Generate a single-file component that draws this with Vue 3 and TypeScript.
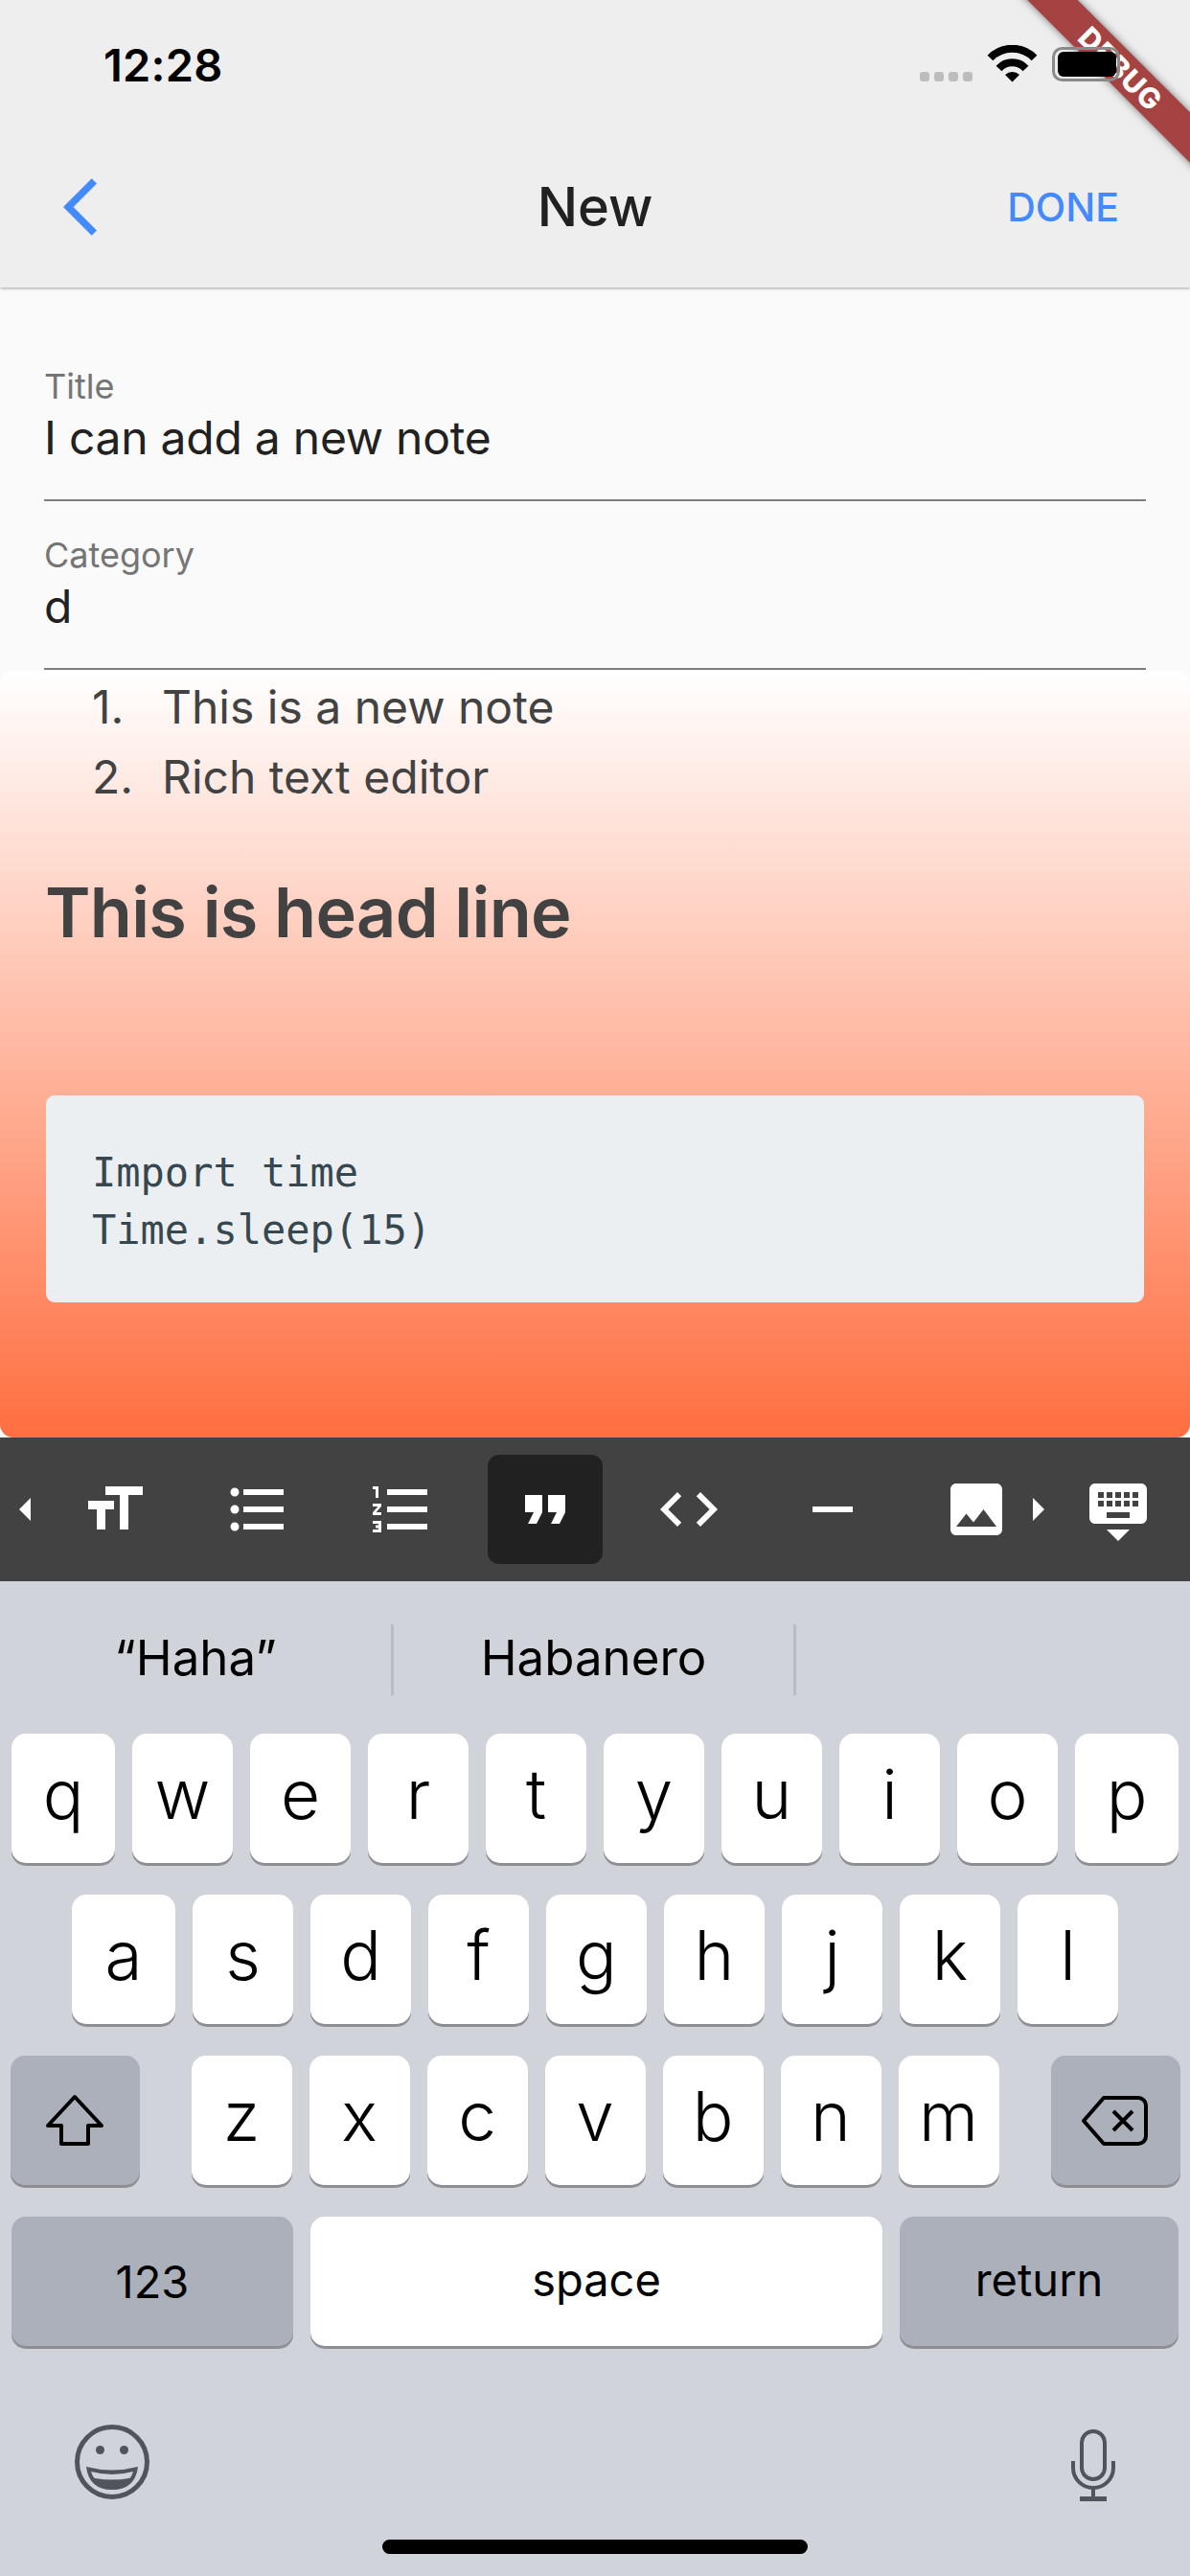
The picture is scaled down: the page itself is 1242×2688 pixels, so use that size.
<script setup lang="ts">
interface Tool {
  name: string
  d: string
  active?: boolean
}

const tools: Tool[] = [
  { name: 'size', d: 'M9 4v3h5v12h3V7h5V4H9zm-6 8h3v7h3v-7h3V9H3v3z' },
  {
    name: 'bullets',
    d: 'M4 10.5c-.83 0-1.5.67-1.5 1.5s.67 1.5 1.5 1.5 1.5-.67 1.5-1.5-.67-1.5-1.5-1.5zm0-6c-.83 0-1.5.67-1.5 1.5S3.17 7.5 4 7.5 5.5 6.83 5.5 6 4.83 4.5 4 4.5zm0 12c-.83 0-1.5.68-1.5 1.5s.68 1.5 1.5 1.5 1.5-.68 1.5-1.5-.67-1.5-1.5-1.5zM7 19h14v-2H7v2zm0-6h14v-2H7v2zm0-8v2h14V5H7z',
  },
  {
    name: 'numbers',
    d: 'M2 17h2v.5H3v1h1v.5H2v1h3v-4H2v1zm1-9h1V4H2v1h1v3zm-1 3h1.8L2 13.1v.9h3v-1H3.2L5 10.9V10H2v1zm5-6v2h14V5H7zm0 14h14v-2H7v2zm0-6h14v-2H7v2z',
  },
  { name: 'quote', d: 'M6 17h3l2-4V7H5v6h3zm8 0h3l2-4V7h-6v6h3z', active: true },
  { name: 'code', d: 'M9.4 16.6L4.8 12l4.6-4.6L8 6l-6 6 6 6 1.4-1.4zm5.2 0l4.6-4.6-4.6-4.6L16 6l6 6-6 6-1.4-1.4z' },
  { name: 'rule', d: 'M5 11h14v2H5z' },
  {
    name: 'image',
    d: 'M21 19V5c0-1.1-.9-2-2-2H5c-1.1 0-2 .9-2 2v14c0 1.1.9 2 2 2h14c1.1 0 2-.9 2-2zM8.5 13.5l2.5 3.01L14.5 12l4.5 6H5l3.5-4.5z',
  },
]

const hideKeyboard =
  'M20 3H4c-1.1 0-1.99.9-1.99 2L2 15c0 1.1.9 2 2 2h16c1.1 0 2-.9 2-2V5c0-1.1-.9-2-2-2zm-9 3h2v2h-2V6zm0 3h2v2h-2V9zM8 6h2v2H8V6zm0 3h2v2H8V9zm-1 2H5V9h2v2zm0-3H5V6h2v2zm9 7H8v-2h8v2zm0-4h-2V9h2v2zm0-3h-2V6h2v2zm3 3h-2V9h2v2zm0-3h-2V6h2v2zm-7 15l4-4H8l4 4z'

const rowOne = 'qwertyuiop'.split('')
const rowTwo = 'asdfghjkl'.split('')
const rowThree = 'zxcvbnm'.split('')
</script>

<template>
  <div class="screen">
    <header class="appbar">
      <div class="status">
        <span class="time">12:28</span>
        <svg class="status_icons" width="212" height="40" viewBox="960 47 212 40">
          <rect x="960" y="75" width="10" height="10" rx="3" fill="#bdbdbd" />
          <rect x="975" y="75" width="10" height="10" rx="3" fill="#bdbdbd" />
          <rect x="990" y="75" width="10" height="10" rx="3" fill="#bdbdbd" />
          <rect x="1005" y="75" width="10" height="10" rx="3" fill="#bdbdbd" />
          <path d="M1033.5 60.5a32 32 0 0 1 46 0" fill="none" stroke="#000" stroke-width="8" />
          <path d="M1042.5 71.5a19 19 0 0 1 28 0" fill="none" stroke="#000" stroke-width="8" />
          <path d="M1049 78a11 11 0 0 1 15 0l-7.500 7.500z" fill="#000" />
          <rect x="1099.500" y="50.500" width="68" height="33" rx="9" fill="none" stroke="#8a8a8a" stroke-width="3" />
          <rect x="1104" y="54" width="61" height="26" rx="6" fill="#000" />
        </svg>
      </div>
      <nav class="nav">
        <svg class="nav_back" width="72" height="72" viewBox="0 0 24 24">
          <path d="M11.67 3.87L9.9 2.1 0 12l9.9 9.9 1.77-1.77L3.54 12z" fill="#448aff" />
        </svg>
        <span class="nav_title">New</span>
        <span class="nav_done">DONE</span>
      </nav>
    </header>

    <div class="banner"><span>DEBUG</span></div>

    <main class="page">
      <section class="form">
        <div class="field">
          <label class="field_label">Title</label>
          <span class="field_value">I can add a new note</span>
        </div>
        <div class="field">
          <label class="field_label">Category</label>
          <span class="field_value">d</span>
        </div>
      </section>

      <section class="editor">
        <ol class="note_list">
          <li><span class="note_num">1.</span>This is a new note</li>
          <li><span class="note_num">2.</span>Rich text editor</li>
        </ol>
        <h1 class="headline">This is head line</h1>
        <pre class="codeblock">Import time
Time.sleep(15)</pre>
      </section>

      <section class="toolbar">
        <div class="toolbar_scroll">
          <svg class="toolbar_arrow left" width="12" height="24" viewBox="0 0 12 24">
            <path d="M12 0v24L0 12z" fill="#fff" />
          </svg>
          <button
            v-for="tool in tools"
            :key="tool.name"
            class="tool"
            :class="{ active: tool.active }"
          >
            <svg width="72" height="72" viewBox="0 0 24 24">
              <path :d="tool.d" fill="#fff" fill-rule="evenodd" />
            </svg>
          </button>
          <svg class="toolbar_arrow right" width="12" height="24" viewBox="0 0 12 24">
            <path d="M0 0v24l12-12z" fill="#fff" />
          </svg>
        </div>
        <svg class="toolbar_hide" width="72" height="72" viewBox="0 0 24 24">
          <path :d="hideKeyboard" fill="#fff" fill-rule="evenodd" />
        </svg>
      </section>

      <section class="keyboard">
        <div class="suggestions">
          <span class="suggestion">“Haha”</span>
          <span class="suggestion">Habanero</span>
          <span class="suggestion"></span>
        </div>

        <div class="keys">
          <div class="key_row">
            <span v-for="k in rowOne" :key="k" class="key letter">{{ k }}</span>
          </div>
          <div class="key_row">
            <span v-for="k in rowTwo" :key="k" class="key letter">{{ k }}</span>
          </div>
          <div class="key_row">
            <span class="key special wide">
              <svg width="64" height="56" viewBox="0 0 64 56">
                <path
                  d="M32 3 L60 33 H46 V52 H18 V33 H4 Z"
                  fill="none"
                  stroke="#000"
                  stroke-width="4"
                  stroke-linejoin="round"
                />
              </svg>
            </span>
            <div class="key_group">
              <span v-for="k in rowThree" :key="k" class="key letter">{{ k }}</span>
            </div>
            <span class="key special wide">
              <svg width="72" height="54" viewBox="0 0 72 54">
                <path
                  d="M24 3H60a8 8 0 0 1 8 8V43a8 8 0 0 1-8 8H24L3 27Z"
                  fill="none"
                  stroke="#000"
                  stroke-width="4"
                  stroke-linejoin="round"
                />
                <path d="M34 17 54 37M54 17 34 37" stroke="#000" stroke-width="4" />
              </svg>
            </span>
          </div>
          <div class="key_row">
            <span class="key special label numbers">123</span>
            <span class="key label space">space</span>
            <span class="key special label return">return</span>
          </div>
        </div>

        <div class="keyboard_bottom">
          <svg width="80" height="80" viewBox="0 0 80 80">
            <circle cx="40" cy="40" r="36.500" fill="none" stroke="#50545c" stroke-width="5" />
            <circle cx="27.500" cy="27.500" r="4.500" fill="#50545c" />
            <circle cx="52.500" cy="27.500" r="4.500" fill="#50545c" />
            <path d="M13 45Q40 52 67 45 64 69 40 69 16 69 13 45Z" fill="#50545c" />
            <path d="M18 50Q40 56 62 50 60 56 58 57 40 60 22 57 20 56 18 50Z" fill="#d0d3d9" />
          </svg>
          <svg class="mic" width="48" height="76" viewBox="0 0 48 76">
            <rect x="12" y="2" width="24" height="50" rx="12" fill="none" stroke="#50545c" stroke-width="4" />
            <path d="M3 33V40a21 21 0 0 0 42 0V33" fill="none" stroke="#50545c" stroke-width="4" />
            <path d="M24 61V72" stroke="#50545c" stroke-width="4" />
            <rect x="10" y="70" width="28" height="5" fill="#50545c" />
          </svg>
        </div>
        <div class="home_bar"></div>
      </section>
    </main>
  </div>
</template>

<style scoped>
.screen {
  position: relative;
  width: 1242px;
  height: 2688px;
  overflow: hidden;
  background: #fafafa;
  font-family: Inter, 'Liberation Sans', sans-serif;
  color: #212121;
}

.appbar {
  height: 300px;
  background: #eeeeee;
  box-shadow: 0 1px 3px rgba(0, 0, 0, 0.35);
  position: relative;
}
.status {
  position: relative;
  z-index: 4;
  height: 132px;
  display: flex;
  justify-content: space-between;
  align-items: flex-start;
  padding: 0 70px 0 108px;
}
.time {
  margin-top: 40px;
  font-size: 47px;
  line-height: 56px;
  font-weight: 600;
  letter-spacing: 0.2px;
  color: #000;
}
.status_icons {
  margin-top: 47px;
}
.nav {
  height: 168px;
  display: grid;
  grid-template-columns: 1fr auto 1fr;
  align-items: center;
  padding: 0 74px 0 66px;
}
.nav_title {
  font-size: 56px;
  font-weight: 500;
  color: #212121;
  margin-left: 8px;
}
.nav_done {
  justify-self: end;
  font-size: 41px;
  font-weight: 500;
  color: #448aff;
}

.banner {
  position: absolute;
  top: 53px;
  right: -128px;
  width: 400px;
  height: 37px;
  z-index: 3;
  transform: rotate(45deg);
  background: rgba(140, 10, 10, 0.75);
  box-shadow: 0 0 8px rgba(0, 0, 0, 0.5);
  display: flex;
  align-items: center;
  justify-content: center;
  color: #fff;
  font-size: 30px;
  font-weight: 800;
  letter-spacing: 1px;
}

.form {
  height: 400px;
  padding: 0 46px;
}
.field {
  box-sizing: border-box;
  height: 176px;
  padding-top: 34px;
  display: flex;
  flex-direction: column;
  border-bottom: 2px solid #7d7d7d;
}
.field:first-child {
  height: 223px;
  padding-top: 81px;
}
.field_label {
  font-size: 36px;
  line-height: 44px;
  color: #757575;
}
.field_value {
  margin-top: 2px;
  font-size: 48px;
  line-height: 60px;
  letter-spacing: -0.25px;
  color: #212121;
}

.editor {
  height: 800px;
  border-radius: 14px;
  background: linear-gradient(180deg, #ffffff 0%, #ff6e40 100%);
  color: #424242;
  overflow: hidden;
}
.note_list {
  list-style: none;
  margin: 0;
  padding: 1px 0 0 96px;
}
.note_list li {
  display: flex;
  font-size: 48px;
  line-height: 73px;
}
.note_num {
  width: 73px;
}
.headline {
  margin: 60px 0 0;
  padding-left: 47px;
  font-size: 72px;
  line-height: 90px;
  font-weight: 600;
  letter-spacing: -0.7px;
  color: #424242;
}
.codeblock {
  margin: 146px 48px 0;
  padding: 51px 48px 45px;
  height: 216px;
  box-sizing: border-box;
  background: #eceff1;
  border-radius: 9px;
  font-family: 'DejaVu Sans Mono', 'Liberation Mono', monospace;
  font-size: 42px;
  line-height: 60px;
  color: #37474f;
}

.toolbar {
  height: 150px;
  background: #424242;
  display: flex;
  align-items: center;
}
.toolbar_scroll {
  position: relative;
  width: 1109px;
  height: 100%;
  padding-left: 44px;
  box-sizing: border-box;
  display: flex;
  align-items: center;
  gap: 30px;
}
.tool {
  flex: none;
  width: 120px;
  height: 114px;
  margin: 0 -15px 0 15px;
  padding: 0;
  border: 0;
  border-radius: 12px;
  background: transparent;
  display: flex;
  align-items: center;
  justify-content: center;
}
.tool.active {
  background: #212121;
}
.toolbar_arrow {
  position: absolute;
  top: 63px;
}
.toolbar_arrow.left {
  left: 20px;
}
.toolbar_arrow.right {
  left: 1078px;
}
.toolbar_hide {
  margin-left: 22px;
}

.keyboard {
  height: 1038px;
  background: #d0d3d9;
  display: flex;
  flex-direction: column;
}
.suggestions {
  height: 159px;
  display: flex;
  align-items: center;
}
.suggestion {
  flex: none;
  height: 74px;
  margin-top: 5px;
  padding-bottom: 6px;
  width: 420px;
  display: flex;
  align-items: center;
  justify-content: center;
  font-size: 51px;
  color: #000;
  border-right: 3px solid #b9bcc2;
  box-sizing: border-box;
}
.suggestion:first-child {
  width: 411px;
}
.suggestion:last-child {
  width: 411px;
  border-right: 0;
}
.keys {
  display: flex;
  flex-direction: column;
  gap: 33px;
  padding: 0 12px;
}
.key_row {
  display: flex;
  justify-content: center;
  gap: 18px;
  height: 135px;
}
.key_group {
  display: flex;
  gap: 18px;
  margin: 0 36px;
}
.key {
  flex: none;
  width: 105px;
  height: 135px;
  border-radius: 15px;
  background: #fff;
  box-shadow: 0 3px 0 #8e8f94;
  display: flex;
  align-items: center;
  justify-content: center;
  color: #000;
}
.letter {
  font-size: 71px;
  font-weight: 350;
  line-height: 1;
  padding-bottom: 8px;
  box-sizing: border-box;
}
.key_row > .letter:first-child,
.key_row:first-child > .letter:last-child {
  width: 108px;
}
.special {
  background: #abb0ba;
}
.wide {
  width: 135px;
}
.label {
  font-size: 47px;
}
.numbers {
  width: 294px;
}
.space {
  width: 597px;
  padding-bottom: 4px;
  box-sizing: border-box;
}
.return {
  width: 291px;
  padding-bottom: 4px;
  box-sizing: border-box;
}
.keyboard_bottom {
  display: flex;
  justify-content: space-between;
  align-items: flex-start;
  padding: 0 77px;
  margin-top: 81px;
}
.mic {
  margin-top: 6px;
}
.home_bar {
  width: 444px;
  height: 15px;
  margin: 39px auto 0;
  border-radius: 8px;
  background: #000;
}
</style>

<style>
html,
body {
  margin: 0;
  padding: 0;
}
</style>
